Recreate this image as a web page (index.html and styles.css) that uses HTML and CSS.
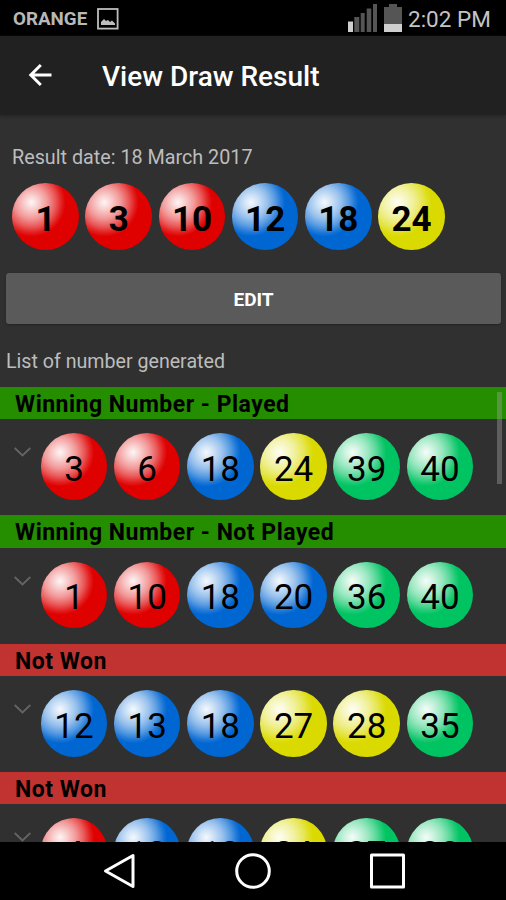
FILE: index.html
```html
<!DOCTYPE html>
<html lang="en">
<head>
<meta charset="utf-8">
<title>View Draw Result</title>
<link rel="stylesheet" href="styles.css">
</head>
<body>
<div class="screen">
  <div class="status">
    <span class="carrier">ORANGE</span>
    <svg class="picture" width="22" height="22" viewBox="0 0 22 22"><rect x="1" y="1" width="19.6" height="19.6" fill="none" stroke="#bdbdbd" stroke-width="1.8"/><path d="M4 17v-3l3-3 2 2 2-1 2 2 2-1.500 3 3V17z" fill="#bdbdbd"/></svg>
    <svg class="signal" width="30" height="28" viewBox="0 0 30 28"><path d="M0 17.500h5V28H0z" fill="#cfcfcf"/><path d="M6.300 13h5v15h-5zM12.700 9h4v19h-4zM18.700 4.500h4.600V28h-4.600zM25 0h4v28h-4z" fill="#555"/></svg>
    <svg class="battery" width="18" height="28" viewBox="0 0 18 28"><path d="M5 0h8v3h5v17H0V3h5z" fill="#555"/><path d="M0 20h18v8H0z" fill="#cfcfcf"/></svg>
    <span class="clock">2:02 PM</span>
  </div>
  <header class="appbar">
    <svg class="back" width="24" height="24" viewBox="0 0 24 24"><path d="M23.500 12H2.500M12.800 2L2.800 12l10 10" fill="none" stroke="#fff" stroke-width="3"/></svg>
    <h1 class="title">View Draw Result</h1>
  </header>
  <main class="content">
    <p class="date">Result date: 18 March 2017</p>
    <div class="balls drawn">
      <span class="ball red">1</span><span class="ball red">3</span><span class="ball red">10</span><span class="ball blue">12</span><span class="ball blue">18</span><span class="ball yellow">24</span>
    </div>
    <button class="edit">EDIT</button>
    <p class="caption">List of number generated</p>
    <div class="list">
      <section class="group">
        <h2 class="label won">Winning Number - Played</h2>
        <div class="row"><svg class="chevron" width="17" height="10" viewBox="0 0 17 10"><path d="M.7 1l7.800 7.400L16.300 1"/></svg>
          <div class="balls"><span class="ball red">3</span><span class="ball red">6</span><span class="ball blue">18</span><span class="ball yellow">24</span><span class="ball green">39</span><span class="ball green">40</span></div></div>
      </section>
      <section class="group">
        <h2 class="label won">Winning Number - Not Played</h2>
        <div class="row"><svg class="chevron" width="17" height="10" viewBox="0 0 17 10"><path d="M.7 1l7.800 7.400L16.300 1"/></svg>
          <div class="balls"><span class="ball red">1</span><span class="ball red">10</span><span class="ball blue">18</span><span class="ball blue">20</span><span class="ball green">36</span><span class="ball green">40</span></div></div>
      </section>
      <section class="group">
        <h2 class="label lost">Not Won</h2>
        <div class="row"><svg class="chevron" width="17" height="10" viewBox="0 0 17 10"><path d="M.7 1l7.800 7.400L16.300 1"/></svg>
          <div class="balls"><span class="ball blue">12</span><span class="ball blue">13</span><span class="ball blue">18</span><span class="ball yellow">27</span><span class="ball yellow">28</span><span class="ball green">35</span></div></div>
      </section>
      <section class="group">
        <h2 class="label lost">Not Won</h2>
        <div class="row"><svg class="chevron" width="17" height="10" viewBox="0 0 17 10"><path d="M.7 1l7.800 7.400L16.300 1"/></svg>
          <div class="balls"><span class="ball red">4</span><span class="ball blue">12</span><span class="ball blue">13</span><span class="ball yellow">24</span><span class="ball green">37</span><span class="ball green">38</span></div></div>
      </section>
      <div class="scrollbar"></div>
    </div>
  </main>
  <nav class="navbar">
    <svg width="34" height="38" viewBox="0 0 34 38"><path d="M3.500 19L31 3.500v31z"/></svg>
    <svg width="38" height="38" viewBox="0 0 38 38"><circle cx="19" cy="19" r="16.300"/></svg>
    <svg width="38" height="38" viewBox="0 0 38 38"><rect x="1.500" y="3" width="32" height="32"/></svg>
  </nav>
</div>
</body>
</html>
```

FILE: styles.css
```css
* { box-sizing: border-box; }
body, h1, h2, p { margin: 0; }
body { background: #303030; font-family: Roboto, sans-serif; }
.screen { width: 506px; height: 900px; display: flex; flex-direction: column; overflow: hidden; }
.status { height: 36px; flex: none; background: #000; color: #c4c4c4; display: flex; align-items: center; padding: 0 15px 0 13px; }
.carrier { font-size: 18.800px; font-weight: 700; width: 84px; white-space: nowrap; padding-top: 2px; color: #b8b8b8; }
.picture { margin-top: 1px; }
.signal { margin-left: auto; }
.battery { margin: 0 6px 0 6px; }
.clock { font-size: 22.500px; width: 83px; white-space: nowrap; padding-top: 2px; }
.appbar { height: 79px; flex: none; background: #212121; display: flex; align-items: center; padding: 1px 0 0 28px; box-shadow: 0 1px 3px #222; }
.back { margin-top: -2px; }
.title { margin-left: 50px; padding-top: 1px; color: #fff; font-size: 28px; line-height: 32px; font-weight: 500; white-space: nowrap; }
.content { flex: 1; min-height: 0; display: flex; flex-direction: column; color: #bdbdbd; }
.date { padding-left: 12px; margin-top: 31px; font-size: 19.750px; line-height: 24px; height: 24px; white-space: nowrap; }
.balls { display: flex; gap: 6.600px; }
.drawn { margin: 13.300px 0 0 12.300px; font-weight: 700; }
.ball { width: 66.600px; height: 66.600px; border-radius: 50%; flex: none; display: flex; align-items: center; justify-content: center; color: #000; font-size: 35px; line-height: 40px; padding-top: 6.500px; background: radial-gradient(circle at 29% 29%, rgba(255,255,255,.96) 0, rgba(255,255,255,.82) 10%, rgba(255,255,255,.6) 24%, rgba(255,255,255,.35) 36%, rgba(255,255,255,.12) 45%, rgba(255,255,255,0) 51%) var(--tone); }
.red { --tone: #df0000; }
.blue { --tone: #0066d2; }
.yellow { --tone: #dada00; }
.green { --tone: #00c362; }
.edit { margin: 23px 5px 0 6px; height: 51px; flex: none; border: 0; border-radius: 3px; background: #5a5a5b; color: #fff; font: 700 19px/24px Roboto, sans-serif; padding: 3px 0 0; box-shadow: 0 1px 2px #242424; }
.caption { margin-top: 26px; padding-left: 6px; font-size: 19.640px; line-height: 24px; height: 24px; white-space: nowrap; }
.list { margin-top: 13px; flex: 1; min-height: 0; overflow: hidden; position: relative; }
.group { height: 128.400px; }
.label { height: 32.300px; padding: 2.200px 0 0 15px; font-size: 23px; letter-spacing: .5px; line-height: 32px; font-weight: 700; color: #000; white-space: nowrap; }
.won { background: #248d00; }
.lost { background: #c03331; }
.row { display: flex; padding: 14px 0 0 14px; }
.chevron { margin: 14px 9.700px 0 0; flex: none; fill: none; stroke: #646464; stroke-width: 1.800; }
.scrollbar { position: absolute; top: 5px; right: 4px; width: 5px; height: 92px; background: rgba(160,160,160,.42); }
.navbar { height: 58px; flex: none; background: #000; display: flex; align-items: center; padding-left: 102px; gap: 98px; }
.navbar svg { fill: none; stroke: #fff; stroke-width: 3; stroke-linejoin: round; }
```
